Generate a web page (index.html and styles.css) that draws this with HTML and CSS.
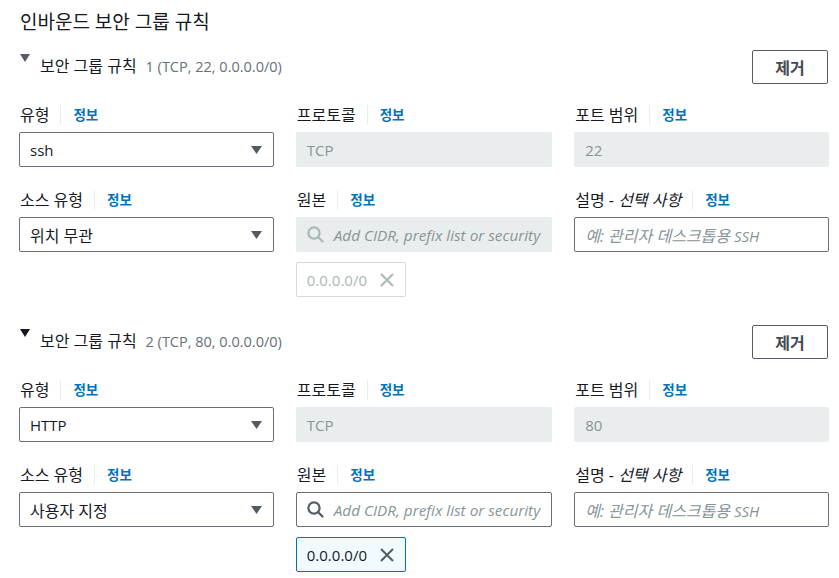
FILE: index.html
```html
<!DOCTYPE html>
<html lang="ko">
<head>
<meta charset="utf-8">
<title>인바운드 보안 그룹 규칙</title>
<link rel="stylesheet" href="styles.css">
</head>
<body>
<div class="page">
  <h2 class="title">인바운드 보안 그룹 규칙</h2>

  <section class="rule">
    <div class="rule-head">
      <div class="rule-title">
        <span class="caret caret-muted"></span>
        <span class="rule-text"><span class="rule-name">보안 그룹 규칙</span> <span class="rule-meta">1 (TCP, 22, 0.0.0.0/0)</span></span>
      </div>
      <button class="btn" type="button">제거</button>
    </div>
    <div class="grid">
      <div class="field">
        <div class="label"><span class="label-text">유형</span><span class="info">정보</span></div>
        <div class="control select"><span>ssh</span><svg class="arrow" viewBox="0 0 11 8" width="11" height="8"><path d="M0 0H11L5.5 8Z"/></svg></div>
      </div>
      <div class="field">
        <div class="label"><span class="label-text">프로토콜</span><span class="info">정보</span></div>
        <div class="control disabled"><span>TCP</span></div>
      </div>
      <div class="field">
        <div class="label"><span class="label-text">포트 범위</span><span class="info">정보</span></div>
        <div class="control disabled"><span>22</span></div>
      </div>
      <div class="field">
        <div class="label"><span class="label-text">소스 유형</span><span class="info">정보</span></div>
        <div class="control select"><span class="ko">위치 무관</span><svg class="arrow" viewBox="0 0 11 8" width="11" height="8"><path d="M0 0H11L5.5 8Z"/></svg></div>
      </div>
      <div class="field">
        <div class="label"><span class="label-text">원본</span><span class="info">정보</span></div>
        <div class="control disabled search"><svg class="search-icon" viewBox="0 0 17 17" width="17" height="17"><circle cx="7" cy="7" r="5.6"/><path d="M11 11L15.5 15.5"/></svg><span class="placeholder">Add CIDR, prefix list or security</span></div>
        <div class="chip chip-disabled"><span>0.0.0.0/0</span><svg class="x" viewBox="0 0 14 14" width="14" height="14"><path d="M1 1L13 13M13 1L1 13"/></svg></div>
      </div>
      <div class="field">
        <div class="label"><span class="label-text">설명 - <i>선택 사항</i></span><span class="info">정보</span></div>
        <div class="control input"><span class="placeholder"><span class="ko">예: 관리자 데스크톱용</span> SSH</span></div>
      </div>
    </div>
  </section>

  <section class="rule">
    <div class="rule-head">
      <div class="rule-title">
        <span class="caret"></span>
        <span class="rule-text"><span class="rule-name">보안 그룹 규칙</span> <span class="rule-meta">2 (TCP, 80, 0.0.0.0/0)</span></span>
      </div>
      <button class="btn" type="button">제거</button>
    </div>
    <div class="grid">
      <div class="field">
        <div class="label"><span class="label-text">유형</span><span class="info">정보</span></div>
        <div class="control select"><span>HTTP</span><svg class="arrow" viewBox="0 0 11 8" width="11" height="8"><path d="M0 0H11L5.5 8Z"/></svg></div>
      </div>
      <div class="field">
        <div class="label"><span class="label-text">프로토콜</span><span class="info">정보</span></div>
        <div class="control disabled"><span>TCP</span></div>
      </div>
      <div class="field">
        <div class="label"><span class="label-text">포트 범위</span><span class="info">정보</span></div>
        <div class="control disabled"><span>80</span></div>
      </div>
      <div class="field">
        <div class="label"><span class="label-text">소스 유형</span><span class="info">정보</span></div>
        <div class="control select"><span class="ko">사용자 지정</span><svg class="arrow" viewBox="0 0 11 8" width="11" height="8"><path d="M0 0H11L5.5 8Z"/></svg></div>
      </div>
      <div class="field">
        <div class="label"><span class="label-text">원본</span><span class="info">정보</span></div>
        <div class="control input search"><svg class="search-icon" viewBox="0 0 17 17" width="17" height="17"><circle cx="7" cy="7" r="5.6"/><path d="M11 11L15.5 15.5"/></svg><span class="placeholder">Add CIDR, prefix list or security</span></div>
        <div class="chip chip-active"><span>0.0.0.0/0</span><svg class="x" viewBox="0 0 14 14" width="14" height="14"><path d="M1 1L13 13M13 1L1 13"/></svg></div>
      </div>
      <div class="field">
        <div class="label"><span class="label-text">설명 - <i>선택 사항</i></span><span class="info">정보</span></div>
        <div class="control input"><span class="placeholder"><span class="ko">예: 관리자 데스크톱용</span> SSH</span></div>
      </div>
    </div>
  </section>
</div>
</body>
</html>
```

FILE: styles.css
```css
* { box-sizing: border-box; }

html, body {
  margin: 0;
  padding: 0;
  background: #ffffff;
}

body {
  font-family: "Open Sans", "Noto Sans CJK KR", "Noto Sans", sans-serif;
  font-size: 15px;
  color: #16191f;
}

.ko {
  font-size: 16px;
}

.page {
  padding: 8px 10px 0 19px;
}

.title {
  margin: 0 0 0 1px;
  font-size: 19px;
  font-weight: 400;
  line-height: 28px;
  color: #16191f;
}

.rule {
  margin-top: 14px;
}

.rule + .rule {
  margin-top: 28px;
}

.rule-head {
  display: flex;
  justify-content: space-between;
  align-items: flex-start;
}

.rule-title {
  display: flex;
  align-items: flex-start;
  padding-left: 1px;
}

.caret {
  width: 0;
  height: 0;
  margin-top: 4px;
  margin-right: 10px;
  border-left: 5px solid transparent;
  border-right: 5px solid transparent;
  border-top: 8px solid #16191f;
}

.caret-muted {
  border-top-color: #545b64;
}

.rule-text {
  margin-top: 6px;
  line-height: 20px;
}

.rule-name {
  font-size: 16px;
}

.rule-meta {
  margin-left: 5px;
  color: #687078;
  font-size: 14.5px;
}

.btn {
  height: 34px;
  width: 76px;
  margin-right: 1px;
  padding: 0;
  border: 1px solid #545b64;
  border-radius: 2px;
  background: #ffffff;
  color: #444a52;
  font-family: inherit;
  font-size: 16px;
  font-weight: 700;
}

.grid {
  display: grid;
  grid-template-columns: repeat(3, 1fr);
  column-gap: 22px;
  row-gap: 23px;
  margin-top: 21px;
}

.field {
  display: flex;
  flex-direction: column;
  align-items: flex-start;
}

.label {
  display: flex;
  align-items: center;
  height: 20px;
  margin-bottom: 7px;
  padding-left: 1px;
  line-height: 20px;
}

.label-text {
  padding-right: 11px;
  border-right: 1px solid #eaeded;
  font-size: 16px;
}

.label-text i {
  font-style: italic;
}

.info {
  padding-left: 12px;
  color: #0073bb;
  font-size: 13.5px;
  font-weight: 700;
}

.control {
  display: flex;
  align-items: center;
  width: 100%;
  height: 35px;
  padding: 0 11px 0 10px;
  border: 1px solid #687078;
  border-radius: 2px;
  background: #ffffff;
  white-space: nowrap;
  overflow: hidden;
}

.select {
  justify-content: space-between;
}

.arrow {
  flex: none;
}

.arrow path {
  fill: #545b64;
}

.disabled {
  border-color: #eaeded;
  background: #eaeded;
  color: #879596;
}

.placeholder {
  color: #879596;
  font-style: italic;
}

.search .placeholder {
  font-size: 15.3px;
}

.search .search-icon {
  flex: none;
  margin-right: 10px;
}

.search-icon circle,
.search-icon path {
  fill: none;
  stroke: #545b64;
  stroke-width: 2.2;
  stroke-linecap: round;
}

.disabled .search-icon circle,
.disabled .search-icon path {
  stroke: #aab7b8;
}

.chip {
  display: flex;
  align-items: center;
  gap: 13px;
  height: 35px;
  margin-top: 10px;
  padding: 0 11px 0 10px;
  border: 1px solid #d5dbdb;
  border-radius: 2px;
  background: #ffffff;
}

.chip .x path {
  fill: none;
  stroke: #545b64;
  stroke-width: 2;
}

.chip-disabled {
  color: #aab7b8;
}

.chip-disabled .x path {
  stroke: #aab7b8;
}

.chip-active {
  border-color: #0073bb;
  background: #f1faff;
  color: #16191f;
}
```
